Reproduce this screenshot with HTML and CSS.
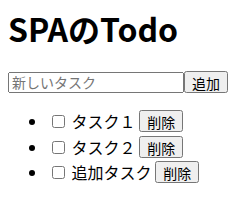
FILE: index.html
```html
<html>

<head>
    <title>SPAのTodo</title>
    <link rel="stylesheet" href="styles.css">
</head>

<body>
    <h1>SPAのTodo</h1>
    <form id="todo-form">
        <input type="text" id="todo-text" placeholder="新しいタスク"><button>追加</button>
    </form>
    <ul id="todo-list">
        <li><input type="checkbox"> <span>タスク１</span> <button>削除</button></li>
        <li><input type="checkbox"> <span>タスク２</span> <button>削除</button></li>
        <li><input type="checkbox"> <span>追加タスク</span> <button>削除</button></li>
    </ul>
</body>

</html>
```

FILE: styles.css
```css
body {
    font-family: "Noto Sans CJK JP", sans-serif;
}

h1 {
    line-height: 1.3;
}

input, button {
    font-family: "Noto Sans CJK JP", sans-serif;
}

#todo-form {
    display: flex;
    align-items: center;
}

#todo-text {
    width: 176px;
    height: 21px;
    font-size: 14px;
    box-sizing: border-box;
}

#todo-form button {
    height: 22px;
    font-size: 14px;
    padding: 0 6px;
}

#todo-list li {
    line-height: 25.5px;
}

#todo-list button {
    height: 22px;
    font-size: 14px;
    padding: 0 6px;
    margin-top: 1px;
    vertical-align: top;
}
```
